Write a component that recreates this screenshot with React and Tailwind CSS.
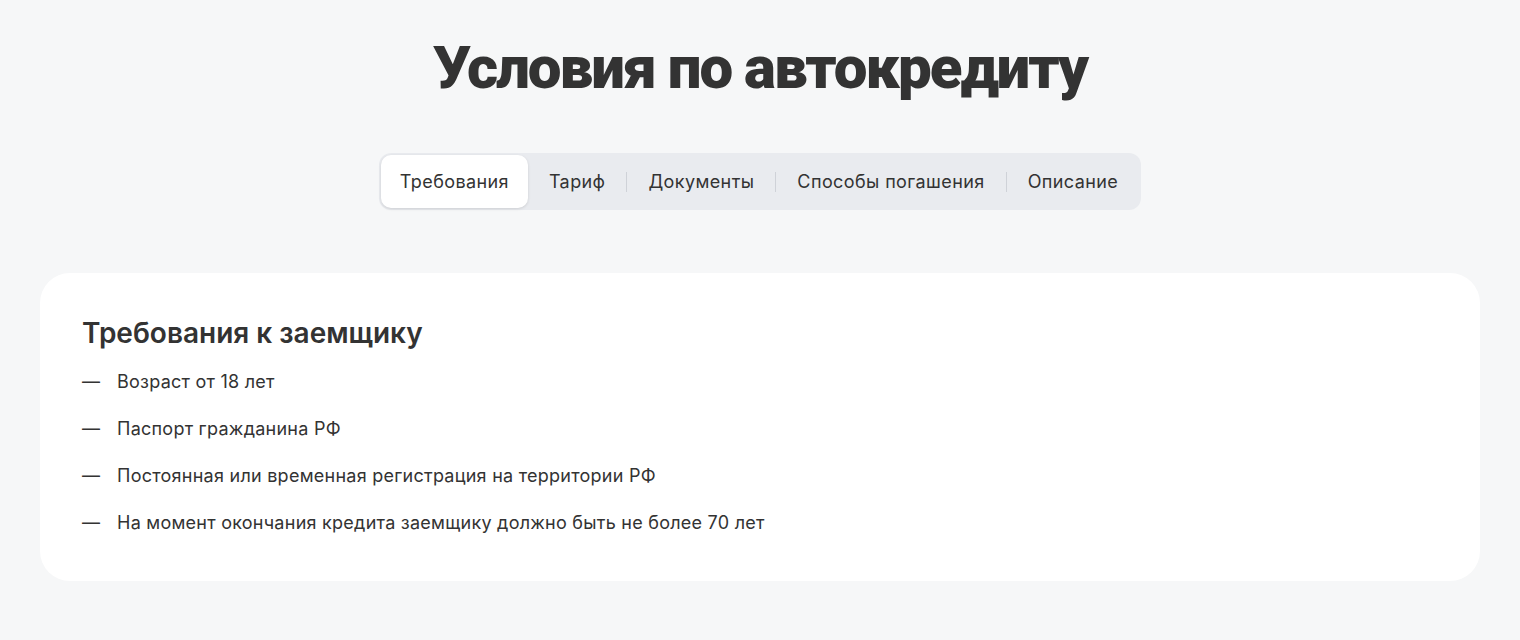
export default function App() {
  const tabs = ["Требования", "Тариф", "Документы", "Способы погашения", "Описание"];
  const items = [
    "Возраст от 18 лет",
    "Паспорт гражданина РФ",
    "Постоянная или временная регистрация на территории РФ",
    "На момент окончания кредита заемщику должно быть не более 70 лет",
  ];
  return (
    <div className="w-[1520px] h-[640px] bg-[#f6f7f8] text-[#333333] flex flex-col items-center" style={{ fontFamily: "Inter, 'Noto Sans', sans-serif" }}>
      <h1 className="mt-[34px] text-[60px] leading-[68px] font-black tracking-[-2px] text-[#333333]" style={{ fontFamily: "Roboto, sans-serif" }}>Условия по автокредиту</h1>
      <div className="mt-[51px] h-[57px] bg-[#e9ebef] rounded-[12px] p-[2px] flex items-center">
        {tabs.map((t, i) => (
          <div key={t} className="flex items-center h-full">
            {i > 1 && <div className="w-px h-[20px] bg-[#cfd2d8]" />}
            <div className={i === 0 ? "h-full px-[19px] flex items-center bg-white rounded-[10px] shadow-[0_1px_3px_rgba(0,0,0,0.12)] text-[18px] tracking-[0.4px]" : "h-full px-[21px] flex items-center text-[18px] tracking-[0.4px]"}>
              {t}
            </div>
          </div>
        ))}
      </div>
      <div className="mt-[63px] w-[1440px] h-[308px] bg-white rounded-[30px] px-[42px] pt-[44px]">
        <h2 className="text-[28px] leading-[32px] font-semibold text-[#333333]">Требования к заемщику</h2>
        <ul className="mt-[21px] flex flex-col gap-[23px]">
          {items.map((it) => (
            <li key={it} className="flex text-[18px] leading-[24px] tracking-[0.25px]">
              <span className="w-[35px]">—</span>
              <span>{it}</span>
            </li>
          ))}
        </ul>
      </div>
    </div>
  );
}
